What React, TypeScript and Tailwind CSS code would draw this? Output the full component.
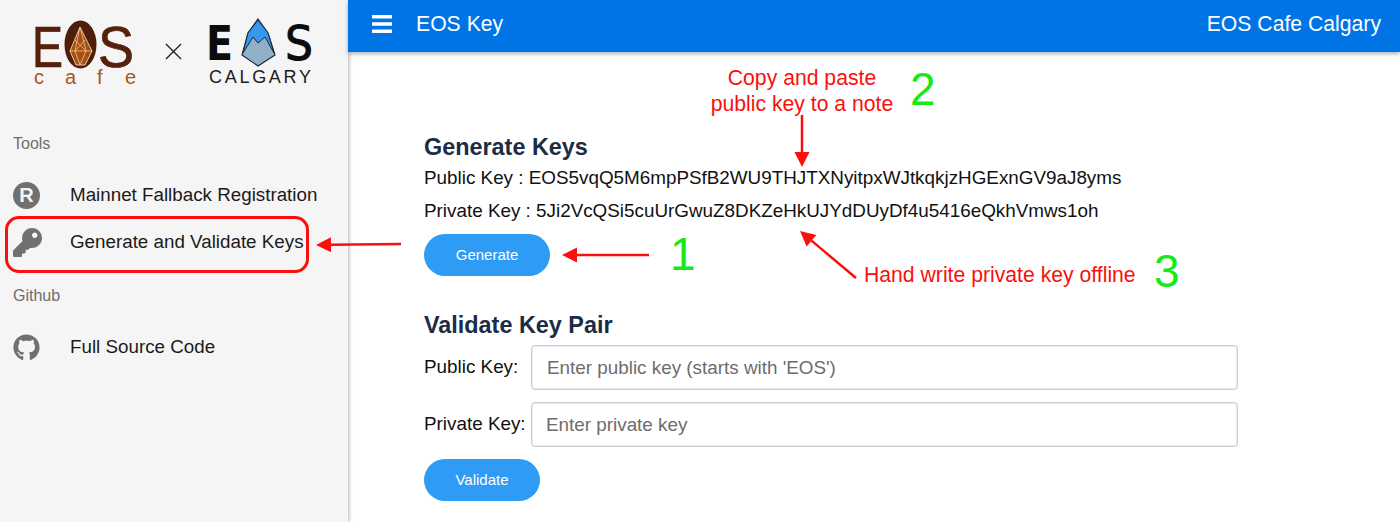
import React from 'react';
import { FaGithub, FaKey } from 'react-icons/fa';

// Red annotation arrow, drawn from tail to head in its own box
const Arrow = ({ className, x1, y1, x2, y2, w, h }: { className: string; x1: number; y1: number; x2: number; y2: number; w: number; h: number }) => {
  const angle = Math.atan2(y2 - y1, x2 - x1);
  const len = 15;
  const wing = 7.5;
  const bx = x2 - Math.cos(angle) * len;
  const by = y2 - Math.sin(angle) * len;
  const px = -Math.sin(angle) * wing;
  const py = Math.cos(angle) * wing;
  return (
    <svg className={className} width={w} height={h} viewBox={`0 0 ${w} ${h}`}>
      <line x1={x1} y1={y1} x2={bx} y2={by} stroke="#fb0f0c" strokeWidth={2.5} />
      <polygon points={`${x2},${y2} ${bx + px},${by + py} ${bx - px},${by - py}`} fill="#fb0f0c" />
    </svg>
  );
};

const CafeLogo = () => (
  <svg width={110} height={84} viewBox="-3 -10 110 84">
    <text x={-1} y={47} fontFamily="Liberation Sans, sans-serif" fontSize={57} fill="#55200c" stroke="#55200c" strokeWidth={0.7} textLength={31} lengthAdjust="spacingAndGlyphs">E</text>
    <text x={65} y={47} fontFamily="Liberation Sans, sans-serif" fontSize={57} fill="#55200c" stroke="#55200c" strokeWidth={0.7} textLength={36} lengthAdjust="spacingAndGlyphs">S</text>
    <ellipse cx={47.5} cy={24.5} rx={16} ry={24} fill="#4f1e0a" />
    <path d="M47 7 L37 31 L43 45 L52 45 L59 31 Z" fill="#a5500f" stroke="#e8c4a4" strokeWidth={1} />
    <path d="M47 7 L42 31 L47 45 L53 31 Z M37 31 H59 M42 20 L53 31 M52 20 L42 31" fill="none" stroke="#e8c4a4" strokeWidth={0.8} />
    <g fontFamily="Liberation Sans, sans-serif" fontSize={20} fill="#a9561f">
      <text x={1} y={64}>c</text>
      <text x={32} y={64}>a</text>
      <text x={64} y={64}>f</text>
      <text x={92} y={64}>e</text>
    </g>
  </svg>
);

const CalgaryLogo = () => (
  <svg width={112} height={84} viewBox="0 -12 112 84">
    <text x={1} y={42} fontFamily="DejaVu Sans, sans-serif" fontWeight={700} fontSize={48} fill="#0c0c0c" textLength={27} lengthAdjust="spacingAndGlyphs">E</text>
    <text x={80} y={42} fontFamily="DejaVu Sans, sans-serif" fontSize={48} fill="#0c0c0c" stroke="#0c0c0c" strokeWidth={1} textLength={28} lengthAdjust="spacingAndGlyphs">S</text>
    <path d="M53 1 L63 15 L70 37 L53 48 L37 37 L43 15 Z" fill="#8fb0c6" stroke="#1b2a36" strokeWidth={1.2} />
    <path d="M53 2 L63 15 L69 35 L60 19 L53 25 L48 19 L38 35 L43 15 Z" fill="#3597ee" stroke="#1b2a36" strokeWidth={1} />
    <text x={4} y={65} fontFamily="Liberation Sans, sans-serif" fontSize={18} fill="#1c1c1c" textLength={102}>CALGARY</text>
  </svg>
);

const NavItem = ({ icon, label, className }: { icon: React.ReactNode; label: string; className: string }) => (
  <div className={`flex items-center pl-[13px] ${className}`}>
    <div className="w-[57px] flex items-center">{icon}</div>
    <span className="text-[18.8px] text-[#1b1b1b] whitespace-nowrap">{label}</span>
  </div>
);

const KeyLine = ({ children, className }: { children: React.ReactNode; className: string }) => (
  <p className={`text-[18.85px] leading-[24px] text-[#111] whitespace-nowrap ${className}`}>{children}</p>
);

const Pill = ({ label, className }: { label: string; className: string }) => (
  <button className={`block h-[42px] rounded-full bg-[#2e9bf5] text-white text-[15px] ${className}`}>{label}</button>
);

const App: React.FC = () => {
  return (
    <div className="relative flex w-[1400px] h-[522px] overflow-hidden bg-white font-['Liberation_Sans',sans-serif]">
      {/* Sidebar */}
      <aside className="relative z-10 w-[348px] h-full shrink-0 bg-[#f5f5f5] shadow-[1px_0_4px_rgba(0,0,0,0.3)]">
        <div className="flex items-start h-[132px] pl-[30px] pt-[6px]">
          <div className="mt-[4px]"><CafeLogo /></div>
          <svg className="mt-[37px] ml-[25px] mr-[23px]" width={17} height={17} viewBox="0 0 17 17">
            <path d="M1 1 L16 16 M16 1 L1 16" stroke="#222" strokeWidth={1.4} />
          </svg>
          <CalgaryLogo />
        </div>
        <p className="pl-[13px] text-[16px] leading-[24px] text-[#6e6e6e]">Tools</p>
        <NavItem className="mt-[27px] h-[24px]" label="Mainnet Fallback Registration" icon={
          <div className="w-[27px] h-[27px] rounded-full bg-[#707070] flex items-center justify-center text-[#f5f5f5] font-bold text-[20px]">R</div>
        } />
        <NavItem className="mt-[23px] h-[24px]" label="Generate and Validate Keys" icon={
          <FaKey className="w-[29px] h-[29px] text-[#707070]" />
        } />
        <p className="mt-[30px] pl-[13px] text-[16px] leading-[24px] text-[#6e6e6e]">Github</p>
        <NavItem className="mt-[27px] h-[24px]" label="Full Source Code" icon={
          <FaGithub className="w-[27px] h-[27px] text-[#707070]" />
        } />
      </aside>

      {/* Main */}
      <div className="flex-1 min-w-0">
        <header className="relative z-20 h-[52px] bg-[#0074e4] text-white flex items-center justify-between pl-[24px] pr-[19px] pb-[4px] shadow-[0_2px_4px_rgba(0,0,0,0.3)]">
          <div className="flex items-center">
            <svg width={20} height={18} viewBox="0 0 20 18" fill="#fff">
              <rect y={0} width={20} height={3.5} />
              <rect y={7.25} width={20} height={3.5} />
              <rect y={14.5} width={20} height={3.5} />
            </svg>
            <span className="ml-[24px] text-[21.2px]">EOS Key</span>
          </div>
          <span className="text-[21.2px]">EOS Cafe Calgary</span>
        </header>
        <main className="pl-[76px] w-[966px]">
          <h2 className="mt-[80px] text-[23.4px] leading-[30px] font-bold text-[#1b2c44]">Generate Keys</h2>
          <KeyLine className="mt-[4px]">Public Key : EOS5vqQ5M6mpPSfB2WU9THJTXNyitpxWJtkqkjzHGExnGV9aJ8yms</KeyLine>
          <KeyLine className="mt-[9px]">Private Key : 5Ji2VcQSi5cuUrGwuZ8DKZeHkUJYdDUyDf4u5416eQkhVmws1oh</KeyLine>
          <Pill label="Generate" className="mt-[11px] w-[126px]" />
          <h2 className="mt-[34px] text-[23.4px] leading-[30px] font-bold text-[#1b2c44]">Validate Key Pair</h2>
          <div className="mt-[5px] flex items-center">
            <label className="w-[107px] text-[18.85px] text-[#111]">Public Key:</label>
            <input readOnly placeholder="Enter public key (starts with 'EOS')" className="w-[707px] h-[45px] px-[15px] text-[18.85px] rounded-[4px] border border-[#c6ccd4] shadow-[inset_0_0_0_1px_#e8ebef] placeholder:text-[#6d6d6d]" />
          </div>
          <div className="mt-[12px] flex items-center">
            <label className="w-[107px] text-[18.85px] text-[#111] whitespace-nowrap">Private Key:</label>
            <input readOnly placeholder="Enter private key" className="w-[707px] h-[45px] px-[14px] text-[18.85px] rounded-[4px] border border-[#c6ccd4] shadow-[inset_0_0_0_1px_#e8ebef] placeholder:text-[#6d6d6d]" />
          </div>
          <Pill label="Validate" className="mt-[12px] w-[116px]" />
        </main>
      </div>

      {/* Annotations over the screenshot */}
      <div className="absolute z-30 left-[5px] top-[216px] w-[304px] h-[57px] rounded-[14px] border-[3px] border-[#fb0f0c]" />
      <Arrow className="absolute z-30 left-[315px] top-[235px]" w={87} h={20} x1={86} y1={9} x2={1} y2={10} />
      <Arrow className="absolute z-30 left-[560px] top-[245px]" w={90} h={20} x1={89} y1={10} x2={2} y2={10} />
      <Arrow className="absolute z-30 left-[790px] top-[113px]" w={24} h={56} x1={12} y1={2} x2={12} y2={54} />
      <Arrow className="absolute z-30 left-[795px] top-[225px]" w={64} h={60} x1={61} y1={53} x2={5} y2={6} />
      <div className="absolute z-30 left-[690px] top-[65px] w-[224px] text-center text-[21.2px] leading-[26px] text-[#fb0f0c]">
        Copy and paste<br />public key to a note
      </div>
      <span className="absolute z-30 left-[864px] top-[262px] text-[21.2px] leading-[26px] text-[#fb0f0c]">Hand write private key offline</span>
      <span className="absolute z-30 left-[670px] top-[227px] text-[46px] leading-[54px] text-[#14ea14]">1</span>
      <span className="absolute z-30 left-[910px] top-[62px] text-[46px] leading-[54px] text-[#14ea14]">2</span>
      <span className="absolute z-30 left-[1154px] top-[244px] text-[46px] leading-[54px] text-[#14ea14]">3</span>
    </div>
  );
};

export default App;
